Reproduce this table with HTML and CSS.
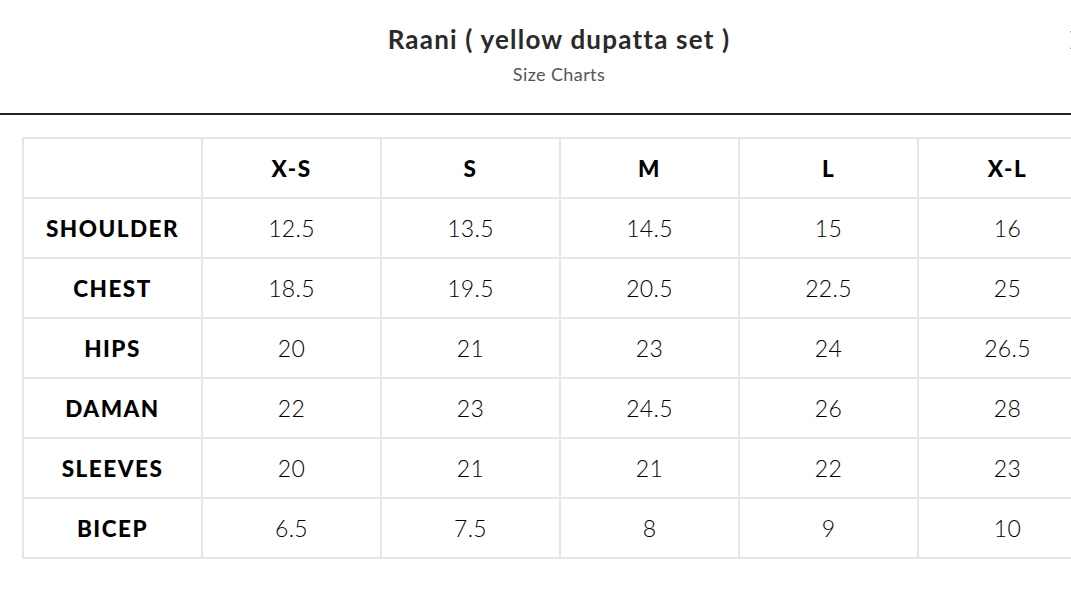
FILE: index.html
```html
<!DOCTYPE html>
<html>
<head>
<meta charset="utf-8">
<link rel="stylesheet" href="styles.css">
</head>
<body>
<div class="modal">
  <header class="head">
    <h1 class="title">Raani ( yellow dupatta set )</h1>
    <p class="sub">Size Charts</p>
    <button class="close" aria-label="Close">
      <svg width="22" height="22" viewBox="0 0 22 22"><path d="M2 2 L20 20 M20 2 L2 20" stroke="#222" stroke-width="2.2" fill="none"/></svg>
    </button>
  </header>
  <div class="body">
    <table class="chart">
      <thead>
        <tr><th></th><th>X-S</th><th>S</th><th>M</th><th>L</th><th>X-L</th></tr>
      </thead>
      <tbody>
        <tr><th>SHOULDER</th><td>12.5</td><td>13.5</td><td>14.5</td><td>15</td><td>16</td></tr>
        <tr><th>CHEST</th><td>18.5</td><td>19.5</td><td>20.5</td><td>22.5</td><td>25</td></tr>
        <tr><th>HIPS</th><td>20</td><td>21</td><td>23</td><td>24</td><td>26.5</td></tr>
        <tr><th>DAMAN</th><td>22</td><td>23</td><td>24.5</td><td>26</td><td>28</td></tr>
        <tr><th>SLEEVES</th><td>20</td><td>21</td><td>21</td><td>22</td><td>23</td></tr>
        <tr><th>BICEP</th><td>6.5</td><td>7.5</td><td>8</td><td>9</td><td>10</td></tr>
      </tbody>
    </table>
  </div>
</div>
</body>
</html>
```
FILE: styles.css
```css
html, body {
  margin: 0;
  padding: 0;
  background: #fff;
  overflow: hidden;
  width: 1071px;
  height: 605px;
}
body {
  font-family: Lato, "Open Sans", sans-serif;
  color: #111;
}
.modal {
  width: 1071px;
}
.head {
  position: relative;
  height: 115px;
  border-bottom: 2px solid #222;
  box-sizing: border-box;
  text-align: center;
  padding-top: 22px;
}
.title {
  margin: 0 0 0 47px;
  font-size: 26px;
  font-weight: 700;
  color: #2a2a2a;
  line-height: 34px;
  letter-spacing: 1.2px;
}
.sub {
  margin: 7px 0 0 47px;
  font-size: 18px;
  font-weight: 400;
  color: #555;
  line-height: 22px;
  letter-spacing: 0.4px;
}
.close {
  position: absolute;
  right: -20px;
  top: 29px;
  border: 0;
  background: none;
  padding: 0;
  width: 22px;
  height: 22px;
}
.body {
  padding: 22px 0 0 22px;
}
.chart {
  border-collapse: collapse;
  table-layout: fixed;
  width: 1074px;
}
.chart th, .chart td {
  width: 179px;
  height: 60px;
  box-sizing: border-box;
  border: 2px solid #e6e6e6;
  text-align: center;
  vertical-align: middle;
  padding: 0;
  font-size: 23px;
  color: #000;
}
.chart th {
  font-weight: 900;
  font-size: 22.5px;
  letter-spacing: 1.5px;
}
.chart td {
  font-weight: 300;
  letter-spacing: 0.3px;
}
```
